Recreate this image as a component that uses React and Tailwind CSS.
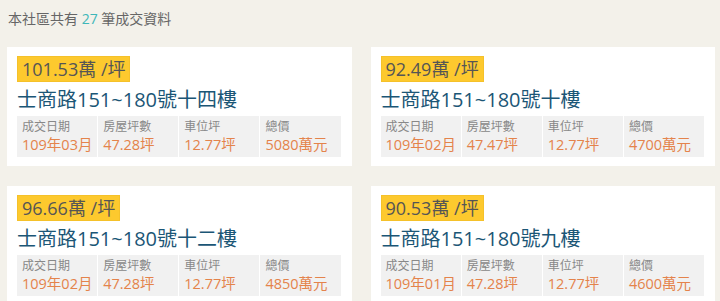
const deals = [
  { price: "101.53", addr: "士商路151~180號十四樓", date: "109年03月", area: "47.28坪", park: "12.77坪", total: "5080萬元" },
  { price: "92.49", addr: "士商路151~180號十樓", date: "109年02月", area: "47.47坪", park: "12.77坪", total: "4700萬元" },
  { price: "96.66", addr: "士商路151~180號十二樓", date: "109年02月", area: "47.28坪", park: "12.77坪", total: "4850萬元" },
  { price: "90.53", addr: "士商路151~180號九樓", date: "109年01月", area: "47.28坪", park: "12.77坪", total: "4600萬元" },
];

const font = { fontFamily: '"Open Sans", "Noto Sans CJK TC", sans-serif' };

const Stat = ({ label, value }) => (
  <div className="bg-[#f1f1f1] pl-[5px] pt-[3px] pb-[3px]">
    <div className="text-[12px] leading-[16px] text-[#888]">{label}</div>
    <div className="text-[14.5px] leading-[19px] text-[#e4834b]">{value}</div>
  </div>
);

const DealCard = ({ deal }) => (
  <div className="bg-white pt-[9px] pl-[10px] pr-[11px] pb-[9px]">
    <span className="inline-block bg-[#fdc92e] border border-[#f5c12a] px-[4px] text-[18px] leading-[24px] text-[#555]">
      {deal.price}萬 /坪
    </span>
    <div className="mt-[4px] text-[20px] leading-[28px] text-[#1b5676]">{deal.addr}</div>
    <div className="mt-[2px] grid grid-cols-4 gap-[1px]">
      <Stat label="成交日期" value={deal.date} />
      <Stat label="房屋坪數" value={deal.area} />
      <Stat label="車位坪" value={deal.park} />
      <Stat label="總價" value={deal.total} />
    </div>
  </div>
);

export default function App() {
  return (
    <div className="min-h-[301px] bg-[#f3f1ea] pl-[7px] pr-[5px] pt-[9px]" style={font}>
      <p className="text-[14px] leading-[20px] text-[#666] pl-[1px]">
        本社區共有 <span className="text-[#3eb7b9]">27</span> 筆成交資料
      </p>
      <div className="mt-[18px] grid grid-cols-2 gap-x-[19px] gap-y-[20px]">
        {deals.map((d, i) => (
          <DealCard key={i} deal={d} />
        ))}
      </div>
    </div>
  );
}
